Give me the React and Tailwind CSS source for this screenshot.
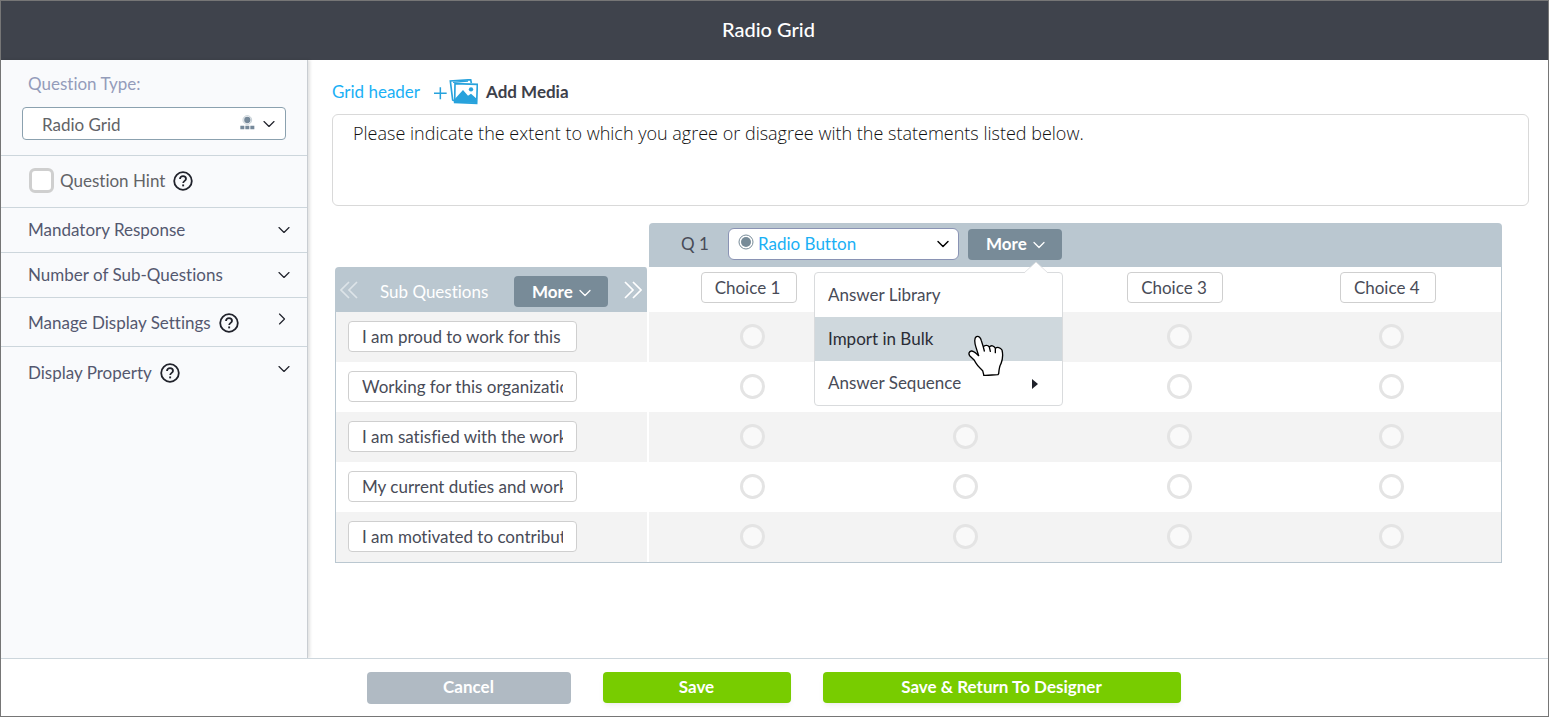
import { useState } from 'react';
import { ChevronDown, ChevronRight } from 'lucide-react';
import { clsx } from 'clsx';

const statements = [
    'I am proud to work for this organization',
    'Working for this organization is rewarding',
    'I am satisfied with the work I do',
    'My current duties and work are clear',
    'I am motivated to contribute more',
];

const settings = [
    { label: 'Mandatory Response', height: 'h-[45px]' },
    { label: 'Number of Sub-Questions', height: 'h-[45px]' },
    { label: 'Manage Display Settings', height: 'h-[49px] pt-0.5', help: true, submenu: true },
    { label: 'Display Property', height: 'h-[49px] pt-0.5', help: true },
];

function HelpIcon() {
    return (
        <svg viewBox="0 0 20 20" className="w-5 h-5 shrink-0" fill="none" stroke="#20222b" aria-hidden="true">
            <circle cx="10" cy="10" r="8.8" strokeWidth="1.8" />
            <path d="M7 8.1C7 6.3 8.3 5.2 10 5.2s3 1.1 3 2.7c0 1.9-2.8 2.1-2.8 4.2" strokeWidth="1.8" />
            <path d="M9.2 14.4h1.9" strokeWidth="1.9" />
        </svg>
    );
}

function GridTypeIcon() {
    return (
        <svg viewBox="0 0 45 45" className="w-[15px] h-[15px] mb-0.5" aria-hidden="true">
            <circle cx="22" cy="15" r="13" fill="none" stroke="#9fb0ba" strokeWidth="1.8" />
            <circle cx="22" cy="15" r="9.5" fill="#76899a" />
            <path d="M1 32h12v11H1zM16 32h12v11H16zM31 32h12v11H31z" fill="#76899a" />
        </svg>
    );
}

function RadioTypeIcon() {
    return (
        <svg viewBox="0 0 16 16" className="w-4 h-4 mb-1" aria-hidden="true">
            <circle cx="8" cy="8" r="7" fill="#fff" stroke="#778b98" />
            <circle cx="8" cy="8" r="5" fill="#778b98" />
        </svg>
    );
}

function MediaIcon() {
    return (
        <svg viewBox="0 0 132 78" className="w-11 h-[26px]" fill="none" stroke="#27a2dc" aria-hidden="true">
            <path d="M0 43h38M19 25v36" strokeWidth="4.5" />
            <path d="M60 65l-4-2-7-57 61-4 2 10" strokeWidth="5" />
            <path d="M57 10l45-4" strokeWidth="4" />
            <path d="M63 14l67 2-2 57-66-3z" fill="#fff" strokeWidth="5" />
            <path d="M63 59l24-26 15 17 9-6 17 15v13l-65-2z" fill="#27a2dc" stroke="none" />
            <circle cx="111" cy="31" r="6.5" fill="#27a2dc" stroke="none" />
        </svg>
    );
}

function DoubleChevron({ className }) {
    return (
        <svg viewBox="0 0 18 18" className={clsx('w-[18px] h-[18px]', className)} fill="none" stroke="currentColor" strokeWidth="1.7" aria-hidden="true">
            <path d="M1 1l8 8-8 8M9 1l8 8-8 8" />
        </svg>
    );
}

function HandPointer() {
    return (
        <svg viewBox="0 0 111 126" className="absolute left-[153px] top-[18px] w-[37px] h-[42px] pointer-events-none" aria-hidden="true">
            <path
                d="M47 119L44 107C35 99 23 85 19 76L5 62C1 56 3 49 10 48C17 47 25 56 32 62L24 37C20 24 19 9 25 5C33 2 38 9 40 17L46 36C50 30 59 29 64 36C69 30 78 31 82 40C88 35 97 37 102 45C105 57 104 73 99 86C94 94 93 103 92 116L90 119C76 119 62 122 47 121zM46 36L49 48M64 36L67 49M82 40L82 53"
                fill="#fff"
                stroke="#000"
                strokeWidth="4"
                strokeLinecap="round"
                strokeLinejoin="round"
            />
        </svg>
    );
}

function MoreButton({ expanded, onClick }) {
    return (
        <button
            type="button"
            aria-expanded={expanded}
            onClick={onClick}
            className="flex items-center gap-0.5 w-[94px] h-[31px] pl-[18px] rounded bg-[#788b98] text-[17px] font-bold text-white"
        >
            More <ChevronDown size={20} strokeWidth={1.5} className="mt-0.5" />
        </button>
    );
}

export default function App() {
    const [menuOpen, setMenuOpen] = useState(true);
    const [answers, setAnswers] = useState({});

    return (
        <div className="min-h-screen flex flex-col border border-[#767676] bg-white font-[Lato,sans-serif] [font-variant-ligatures:none] text-[17px] leading-6 text-[#484b57]">
            {/* Title bar */}
            <header className="h-[59px] flex items-center justify-center pr-3 pb-1 bg-[#3f434c]">
                <h1 className="text-[20px] font-medium text-white">Radio Grid</h1>
            </header>

            <div className="flex-1 flex">
                {/* Question settings */}
                <aside className="w-[307px] shrink-0 bg-[#f9fafc] border-r border-[#c9cdd2] shadow-[2px_0_3px_rgba(0,0,0,0.12)]">
                    <div className="h-24 px-[21px] pt-3 border-b border-[#cdd6dc]">
                        <label htmlFor="question-type" className="block px-1.5 text-[#949cba]">Question Type:</label>
                        <div className="relative mt-[11px]">
                            <select id="question-type" className="appearance-none w-full h-[33px] pl-[19px] pt-0.5 rounded border border-[#8ba1af] bg-white text-[#626367]">
                                <option>Radio Grid</option>
                            </select>
                            <div className="absolute inset-y-0 right-[7px] flex items-center gap-1 pointer-events-none text-[#20222b]">
                                <GridTypeIcon />
                                <ChevronDown size={20} strokeWidth={1.4} />
                            </div>
                        </div>
                    </div>

                    <div className="flex items-center h-[52px] px-7 pb-0.5 border-b border-[#cdd6dc]">
                        <input id="question-hint" type="checkbox" className="appearance-none w-[25px] h-[25px] mr-1.5 rounded-md border-3 border-[#cfcfcf] bg-white" />
                        <label htmlFor="question-hint" className="mr-2 text-[#626367]">Question Hint</label>
                        <HelpIcon />
                    </div>

                    {settings.map((item) => (
                        <button
                            key={item.label}
                            type="button"
                            className={clsx('flex items-center gap-2 w-full pl-[27px] pr-[13px] border-b border-[#cdd6dc] last:border-b-0 text-left text-[#54586f]', item.height)}
                        >
                            {item.label}
                            {item.help && <HelpIcon />}
                            <span className={clsx('ml-auto text-[#20222b]', item.help && 'mb-2', item.submenu && 'mr-0.5')}>
                                {item.submenu ? <ChevronRight size={20} strokeWidth={1.4} /> : <ChevronDown size={20} strokeWidth={1.4} />}
                            </span>
                        </button>
                    ))}
                </aside>

                {/* Grid editor */}
                <main className="flex-1 min-w-0 pl-6 pr-[19px] pt-5">
                    <div className="flex items-center h-6 mb-2.5">
                        <label htmlFor="grid-header" className="mr-3.5 text-[#1ab0f5]">Grid header</label>
                        <button type="button" className="flex items-center gap-2 font-bold text-[#3d404a]">
                            <MediaIcon /> Add Media
                        </button>
                    </div>
                    <textarea
                        id="grid-header"
                        className="block w-full h-[92px] px-5 py-1.5 resize-none rounded-md border border-[#d9d9d9] font-['Open_Sans',sans-serif] font-light text-[18px] text-[#111]"
                        defaultValue="Please indicate the extent to which you agree or disagree with the statements listed below."
                    />

                    <div className="mt-[17px] ml-[3px] mr-[27px]">
                        <table className="w-full table-fixed border-separate border-spacing-0">
                            <colgroup>
                                <col className="w-[314px]" />
                                <col />
                                <col />
                                <col />
                                <col />
                            </colgroup>
                            <thead className="text-left">
                                <tr className="h-11">
                                    <td />
                                    <th colSpan={4} className="p-0 pb-0.5 rounded-t bg-[#bac7d0] font-normal">
                                        <div className="flex items-center pl-8">
                                            <label htmlFor="answer-type" className="w-[47px]">Q 1</label>
                                            <div className="relative mr-[9px]">
                                                <select id="answer-type" className="block appearance-none w-[231px] h-8 pl-[29px] rounded-md border border-[#8a93b4] bg-white text-[#1ab0f5]">
                                                    <option>Radio Button</option>
                                                </select>
                                                <div className="absolute inset-y-0 left-2.5 right-1.5 flex items-center justify-between pointer-events-none text-black">
                                                    <RadioTypeIcon />
                                                    <ChevronDown size={20} strokeWidth={1.7} />
                                                </div>
                                            </div>
                                            <div className="relative">
                                                <MoreButton expanded={menuOpen} onClick={() => setMenuOpen(!menuOpen)} />
                                                {menuOpen && (
                                                    <div role="menu" className="absolute z-10 top-[43px] -right-px w-[249px] rounded border border-[#d9dbdd] bg-white">
                                                        <svg viewBox="0 0 26 13" className="absolute right-[13px] -top-3 w-[26px] h-[13px]" aria-hidden="true">
                                                            <path d="M0 13L13 1l13 12z" fill="#fff" />
                                                            <path d="M1 12L13 1l12 11" fill="none" stroke="#d9dbdd" strokeWidth="0.8" />
                                                        </svg>
                                                        <button type="button" role="menuitem" className="block w-full h-11 px-[13px] text-left">Answer Library</button>
                                                        <div className="relative">
                                                            <button type="button" role="menuitem" className="block w-full h-11 px-[13px] bg-[#cfd8dd] text-left text-[#2b2d36]">Import in Bulk</button>
                                                            <HandPointer />
                                                        </div>
                                                        <button type="button" role="menuitem" className="flex items-center justify-between w-full h-11 pl-[13px] pr-6 text-left">
                                                            Answer Sequence
                                                            <svg viewBox="0 0 6 10" className="w-1.5 h-2.5 mt-0.5" aria-hidden="true">
                                                                <path d="M0 0l6 5-6 5z" fill="#20222b" />
                                                            </svg>
                                                        </button>
                                                    </div>
                                                )}
                                            </div>
                                        </div>
                                    </th>
                                </tr>
                                <tr className="h-[45px]">
                                    <th className="p-0 border-r-2 border-white rounded-t bg-[#bac7d0] font-normal text-white">
                                        <div className="flex items-center px-[5px] pt-1">
                                            <button type="button" aria-label="Previous" className="w-10 pb-1 text-[#dde4e8]">
                                                <DoubleChevron className="-scale-x-100" />
                                            </button>
                                            <span className="flex-1">Sub Questions</span>
                                            <MoreButton expanded={false} />
                                            <button type="button" aria-label="Next" className="ml-4 pb-1">
                                                <DoubleChevron />
                                            </button>
                                        </div>
                                    </th>
                                    {[1, 2, 3, 4].map((n) => (
                                        <th key={n} className="p-0 pr-3.5 pb-1 text-center last:border-r border-[#bac7d0] font-normal">
                                            <input aria-label={`Choice ${n}`} defaultValue={`Choice ${n}`} className="w-24 h-[31px] px-[13px] rounded border border-[#cfcfcf] bg-white" />
                                        </th>
                                    ))}
                                </tr>
                            </thead>
                            <tbody>
                                {statements.map((text, row) => (
                                    <tr key={text} className="h-[50px] last:h-[51px] odd:bg-[#f3f3f3] last:*:border-b">
                                        <td className="p-0 pl-3 pb-0.5 border-l border-[#bac7d0] shadow-[inset_-2px_0_0_#fff]">
                                            <input aria-label={`Sub question ${row + 1}`} defaultValue={text} className="block w-[229px] h-[31px] px-[13px] rounded border border-[#cfcfcf] bg-white" />
                                        </td>
                                        {[1, 2, 3, 4].map((n) => (
                                            <td key={n} className="p-0 pr-1.5 pb-0.5 last:border-r border-[#bac7d0]">
                                                <input
                                                    type="radio"
                                                    name={`row-${row}`}
                                                    aria-label={`${text}: choice ${n}`}
                                                    checked={answers[row] === n}
                                                    onChange={() => setAnswers({ ...answers, [row]: n })}
                                                    className="block mx-auto appearance-none w-[25px] h-[25px] rounded-full border-3 border-[#e4e4e4] bg-white/50 checked:bg-[#788b98]"
                                                />
                                            </td>
                                        ))}
                                    </tr>
                                ))}
                            </tbody>
                        </table>
                    </div>
                </main>
            </div>

            {/* Actions */}
            <footer className="relative flex justify-center gap-8 h-[58px] pt-[13px] pr-0.5 border-t border-[#cdd6dc] bg-white font-bold text-white">
                <button type="button" className="w-[204px] h-8 pb-0.5 rounded bg-[#b0bac3]">Cancel</button>
                <button type="button" className="w-[188px] h-[31px] pb-0.5 rounded bg-[#78cc00] shadow-md shadow-black/5">Save</button>
                <button type="button" className="w-[358px] h-[31px] pb-0.5 rounded bg-[#78cc00] shadow-md shadow-black/5">Save &amp; Return To Designer</button>
            </footer>
        </div>
    );
}
